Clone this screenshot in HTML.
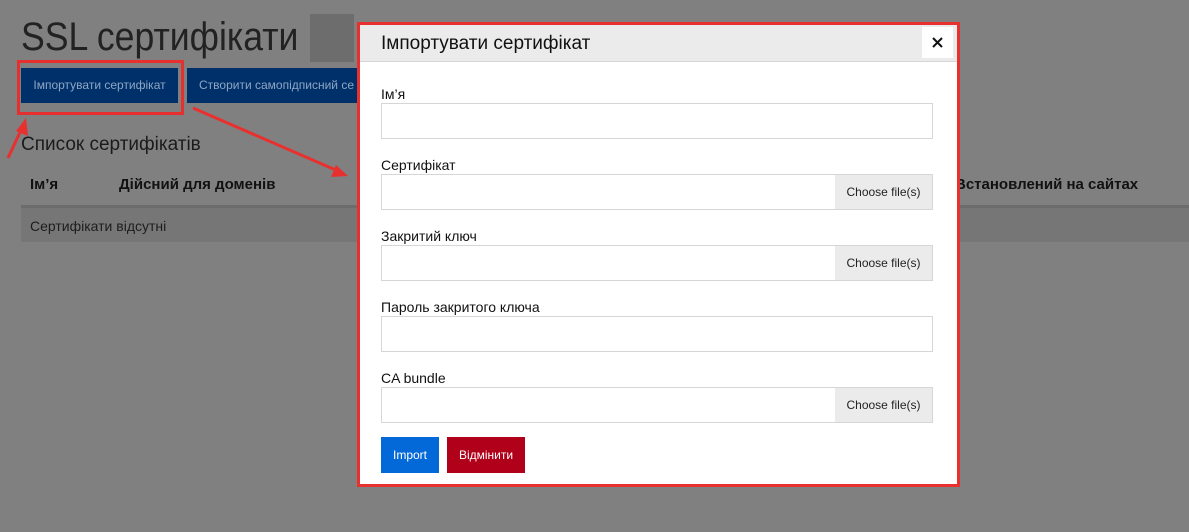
<!DOCTYPE html>
<html><head><meta charset="utf-8"><style>
*{box-sizing:border-box;margin:0;padding:0}
body{width:1189px;height:532px;background:#808080;position:relative;overflow:hidden;font-family:"Liberation Sans",sans-serif;color:#111}
.abs{position:absolute}
.title{left:21px;top:15px;font-size:40px;color:#222;transform:scaleX(0.89);transform-origin:0 0}
.blur{left:310px;top:14px;width:44px;height:48px;background:#6d6d6d}
.btn1{left:21px;top:68px;width:157px;height:35px;background:#00306a;color:#8ea6c4;font-size:12px;line-height:35px;text-align:center}
.btn2{left:187px;top:68px;width:200px;height:35px;background:#00306a;color:#8ea6c4;font-size:12px;line-height:35px;padding-left:12px}
.ann{left:17px;top:60px;width:167px;height:55px;border:3px solid #e6302f}
.h2{left:21px;top:134px;font-size:19px;color:#1b1b1b}
.th{top:176px;font-size:15px;font-weight:bold;color:#111}
.row{left:21px;top:205px;width:1168px;height:37px;background:#767676;border-top:3px solid #6c6c6c;font-size:14px;line-height:36px;padding-left:9px;color:#1d1d1d}
.modal{left:357px;top:22px;width:603px;height:465px;background:#fff;border:3px solid #e8302f}
.mh{height:37px;background:#ebebeb;border-bottom:1px solid #d6d6d6;font-size:19px;line-height:37px;padding-left:21px;color:#111}
.x{position:absolute;right:4px;top:2px;width:31px;height:31px;background:#fff}
.lab{position:absolute;left:21px;font-size:14px;line-height:16px;color:#111}
.inp{position:absolute;left:21px;width:552px;height:36px;border:1px solid #d6d6d6;background:#fff}
.cf{position:absolute;right:0;top:0;width:97px;height:34px;background:#ebebeb;font-size:12px;line-height:34px;text-align:center;color:#222}
.b{position:absolute;top:412px;height:36px;color:#fff;font-size:12px;line-height:36px;text-align:center}
</style></head><body>
<div class="abs title">SSL сертифікати</div>
<div class="abs blur"></div>
<div class="abs btn1">Імпортувати сертифікат</div>
<div class="abs btn2">Створити самопідписний се</div>
<div class="abs ann"></div>
<div class="abs h2">Список сертифікатів</div>
<div class="abs th" style="left:30px">Ім’я</div>
<div class="abs th" style="left:119px">Дійсний для доменів</div>
<div class="abs th" style="left:955px">Встановлений на сайтах</div>
<div class="abs row">Сертифікати відсутні</div>
<svg class="abs" style="left:0;top:0" width="1189" height="532">
<g stroke="#e8302f" stroke-width="3" fill="#e8302f">
<line x1="8" y1="158" x2="22" y2="128"/><polygon points="26,118 28,136 16,131" stroke="none"/>
<line x1="193" y1="108" x2="338" y2="171"/><polygon points="348,176 331,177 336,165" stroke="none"/>
</g></svg>
<div class="abs modal">
<div class="mh">Імпортувати сертифікат<div class="x"><svg width="31" height="31"><path d="M11 11L20 20M20 11L11 20" stroke="#111" stroke-width="2"/></svg></div></div>
<div class="lab" style="top:61px">Ім’я</div>
<div class="inp" style="top:78px"></div>
<div class="lab" style="top:132px">Сертифікат</div>
<div class="inp" style="top:149px"><div class="cf">Choose file(s)</div></div>
<div class="lab" style="top:203px">Закритий ключ</div>
<div class="inp" style="top:220px"><div class="cf">Choose file(s)</div></div>
<div class="lab" style="top:274px">Пароль закритого ключа</div>
<div class="inp" style="top:291px"></div>
<div class="lab" style="top:345px">CA bundle</div>
<div class="inp" style="top:362px"><div class="cf">Choose file(s)</div></div>
<div class="b" style="left:21px;width:58px;background:#0469d8">Import</div>
<div class="b" style="left:87px;width:78px;background:#b0001a">Відмінити</div>
</div>
</body></html>
